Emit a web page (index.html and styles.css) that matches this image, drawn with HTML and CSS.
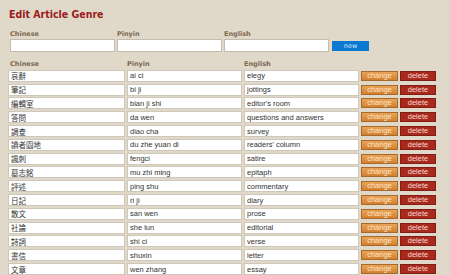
FILE: index.html
```html
<!DOCTYPE html>
<html lang="en">
<head>
    <meta charset="UTF-8">
    <title>Edit Article Genre</title>
    <link rel="stylesheet" href="styles.css">
</head>
<body>
    <h1 class="title">Edit Article Genre</h1>

    <form class="new-form">
        <label class="field">
            <span>Chinese</span>
            <input type="text">
        </label>
        <label class="field">
            <span>Pinyin</span>
            <input type="text">
        </label>
        <label class="field">
            <span>English</span>
            <input type="text">
        </label>
        <button type="button" class="btn-new">new</button>
    </form>

    <div class="genre-list">
        <div class="list-head">
            <span>Chinese</span>
            <span>Pinyin</span>
            <span>English</span>
        </div>
        <!-- one row per genre -->
        <div class="row"><input value="哀辭"><input value="ai ci"><input value="elegy"><button class="btn-change">change</button><button class="btn-delete">delete</button></div>
        <div class="row"><input value="筆記"><input value="bi ji"><input value="jottings"><button class="btn-change">change</button><button class="btn-delete">delete</button></div>
        <div class="row"><input value="編輯室"><input value="bian ji shi"><input value="editor's room"><button class="btn-change">change</button><button class="btn-delete">delete</button></div>
        <div class="row"><input value="答問"><input value="da wen"><input value="questions and answers"><button class="btn-change">change</button><button class="btn-delete">delete</button></div>
        <div class="row"><input value="調查"><input value="diao cha"><input value="survey"><button class="btn-change">change</button><button class="btn-delete">delete</button></div>
        <div class="row"><input value="讀者園地"><input value="du zhe yuan di"><input value="readers' column"><button class="btn-change">change</button><button class="btn-delete">delete</button></div>
        <div class="row"><input value="諷刺"><input value="fengci"><input value="satire"><button class="btn-change">change</button><button class="btn-delete">delete</button></div>
        <div class="row"><input value="墓志銘"><input value="mu zhi ming"><input value="epitaph"><button class="btn-change">change</button><button class="btn-delete">delete</button></div>
        <div class="row"><input value="評述"><input value="ping shu"><input value="commentary"><button class="btn-change">change</button><button class="btn-delete">delete</button></div>
        <div class="row"><input value="日記"><input value="ri ji"><input value="diary"><button class="btn-change">change</button><button class="btn-delete">delete</button></div>
        <div class="row"><input value="散文"><input value="san wen"><input value="prose"><button class="btn-change">change</button><button class="btn-delete">delete</button></div>
        <div class="row"><input value="社論"><input value="she lun"><input value="editorial"><button class="btn-change">change</button><button class="btn-delete">delete</button></div>
        <div class="row"><input value="詩詞"><input value="shi ci"><input value="verse"><button class="btn-change">change</button><button class="btn-delete">delete</button></div>
        <div class="row"><input value="書信"><input value="shuxin"><input value="letter"><button class="btn-change">change</button><button class="btn-delete">delete</button></div>
        <div class="row"><input value="文章"><input value="wen zhang"><input value="essay"><button class="btn-change">change</button><button class="btn-delete">delete</button></div>
    </div>
</body>
</html>
```

FILE: styles.css
```css
body {
    margin: 0;
    padding: 0 8px;
    background-color: #e0d8c9;
    font-family: "DejaVu Sans", Verdana, sans-serif;
    overflow: hidden;
}

.title {
    margin: 6px 0 0 1px;
    font-family: "DejaVu Sans Condensed", "DejaVu Sans", sans-serif;
    font-size: 10.5px;
    line-height: 16px;
    color: #9a1c1c;
}

.new-form {
    display: flex;
    align-items: flex-end;
    gap: 2px;
    margin: 8px 0 0 2px;
}

.field {
    display: flex;
    flex-direction: column;
}

.field span,
.list-head span {
    font-size: 6.5px;
    font-weight: bold;
    color: #7a6850;
    line-height: 9px;
}

.field input {
    box-sizing: border-box;
    width: 105px;
    height: 13px;
    margin: 0;
    border: 1px solid #c4bcae;
    background: #fff;
}

.btn-new {
    width: 37px;
    height: 10px;
    margin: 0 0 1px 1px;
    padding: 0;
    border: none;
    background: #0b78d2;
    color: #dceaff;
    font-family: "DejaVu Sans", Verdana, sans-serif;
    font-size: 6.5px;
    line-height: 10px;
}

.list-head {
    display: grid;
    grid-template-columns: 117px 117px 117px;
    margin-top: 8px;
    padding-left: 2px;
}

.row {
    display: grid;
    grid-template-columns: 117px 115px 115px 37px 36px;
    column-gap: 2px;
    align-items: center;
    height: 13.8px;
}

.row input {
    box-sizing: border-box;
    width: 100%;
    height: 12px;
    margin: 0;
    padding: 0 2px;
    border: 1px solid #cfc8ba;
    background: #fff;
    font-family: "Liberation Sans", Arial, "Noto Sans CJK TC", sans-serif;
    font-size: 7.5px;
    color: #333;
}

.btn-change,
.btn-delete {
    height: 10px;
    margin: 0;
    padding: 0;
    font-family: "Liberation Sans", Arial, sans-serif;
    font-size: 7.5px;
    line-height: 8px;
}

.btn-change {
    border: 1px solid #a8692c;
    background: linear-gradient(#e9a457, #d4802e);
    color: #fbe6cc;
}

.btn-delete {
    border: 1px solid #7e1e14;
    background: #a9291c;
    color: #f6d6cf;
}
```
